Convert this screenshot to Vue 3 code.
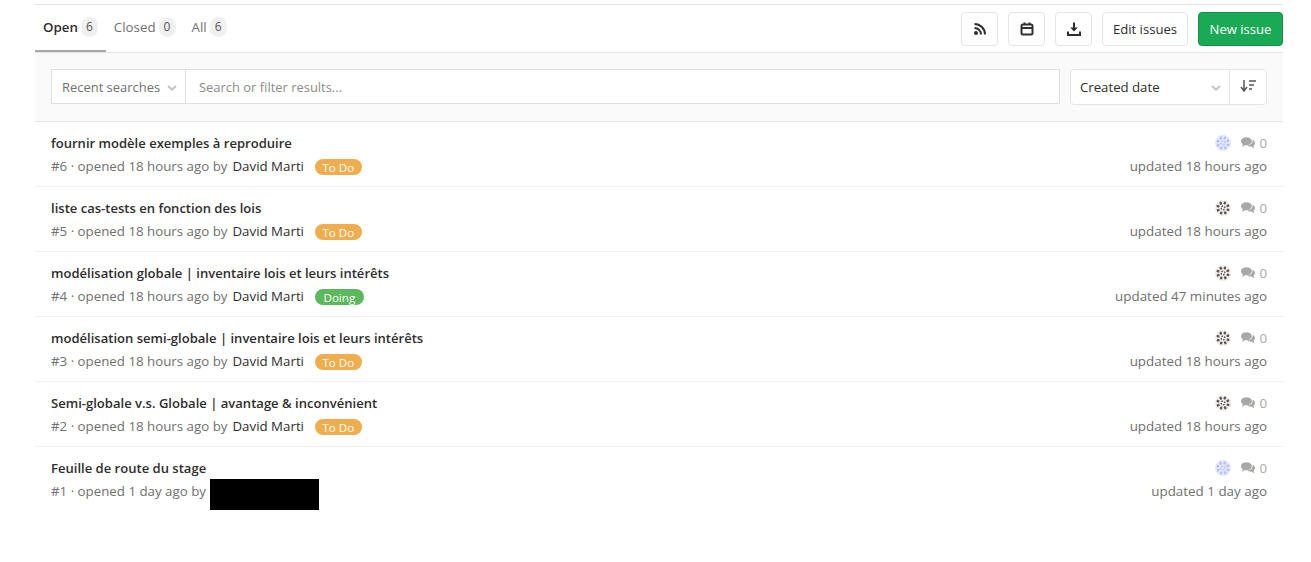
<script setup>
const issues = [
  { id: 6, title: 'fournir modèle exemples à reproduire', opened: '18 hours ago', author: 'David Marti', label: 'To Do', updated: '18 hours ago', light: true },
  { id: 5, title: 'liste cas-tests en fonction des lois', opened: '18 hours ago', author: 'David Marti', label: 'To Do', updated: '18 hours ago' },
  { id: 4, title: 'modélisation globale | inventaire lois et leurs intérêts', opened: '18 hours ago', author: 'David Marti', label: 'Doing', updated: '47 minutes ago' },
  { id: 3, title: 'modélisation semi-globale | inventaire lois et leurs intérêts', opened: '18 hours ago', author: 'David Marti', label: 'To Do', updated: '18 hours ago' },
  { id: 2, title: 'Semi-globale v.s. Globale | avantage & inconvénient', opened: '18 hours ago', author: 'David Marti', label: 'To Do', updated: '18 hours ago' },
  { id: 1, title: 'Feuille de route du stage', opened: '1 day ago', redacted: true, updated: '1 day ago', light: true },
]
const tabs = [
  { name: 'Open', count: 6, active: true },
  { name: 'Closed', count: 0 },
  { name: 'All', count: 6 },
]
const spokes = [0, 45, 90, 135, 180, 225, 270, 315]
</script>

<template>
  <div class="page">
    <div class="top">
      <div class="tabs">
        <div v-for="t in tabs" :key="t.name" class="tab" :class="{ active: t.active }">
          {{ t.name }}<span class="count">{{ t.count }}</span>
        </div>
      </div>
      <div class="actions">
        <button class="btn icon">
          <svg width="16" height="16" viewBox="0 0 16 16" fill="none" stroke="#2e2e2e" stroke-width="2"><circle cx="4" cy="12" r="2" fill="#2e2e2e" stroke="none"/><path d="M2.5 7a6.5 6.5 0 0 1 6.5 6.5M2.5 3a10.5 10.5 0 0 1 10.5 10.5"/></svg>
        </button>
        <button class="btn icon">
          <svg width="16" height="16" viewBox="0 0 16 16" fill="none" stroke="#2e2e2e" stroke-width="2"><rect x="2.5" y="3.5" width="11" height="10" rx="1.5"/><path d="M3 7h10M5.5 1.5v2.5M10.5 1.5v2.5"/></svg>
        </button>
        <button class="btn icon">
          <svg width="16" height="16" viewBox="0 0 16 16" fill="none" stroke="#2e2e2e" stroke-width="2"><path d="M2 10.5v3.5h12v-3.5"/><path d="M8 1.5v7" /><path d="M4.2 6.5 8 10.5l3.8-4z" fill="#2e2e2e" stroke="none"/></svg>
        </button>
        <button class="btn edit">Edit issues</button>
        <button class="btn primary">New issue</button>
      </div>
    </div>

    <div class="filters">
      <div class="search">
        <div class="recent">Recent searches
          <svg class="chev" width="10" height="6" viewBox="0 0 10 6" fill="none" stroke="#c4c4c4" stroke-width="2"><path d="M1 1l4 3.6L9 1"/></svg>
        </div>
        <div class="placeholder">Search or filter results...</div>
      </div>
      <div class="sort">
        <div class="sort-field">Created date
          <svg class="chev" width="10" height="6" viewBox="0 0 10 6" fill="none" stroke="#c4c4c4" stroke-width="2"><path d="M1 1l4 3.6L9 1"/></svg>
        </div>
        <div class="sort-dir">
          <svg width="16" height="14" viewBox="0 0 16 14" fill="none" stroke="#555" stroke-width="1.5"><path d="M4 1v10M1 8l3 4 3-4"/><path d="M9 2h7M9 6h5M9 10h3"/></svg>
        </div>
      </div>
    </div>

    <div class="row" v-for="i in issues" :key="i.id">
      <div class="main">
        <div class="title">{{ i.title }}</div>
        <div class="meta">
          <span>#{{ i.id }} · opened {{ i.opened }} by</span>
          <span v-if="i.redacted" class="redact"></span>
          <template v-else>
            <span class="author">{{ i.author }}</span>
            <span class="label" :class="i.label === 'Doing' ? 'doing' : 'todo'">{{ i.label }}</span>
          </template>
        </div>
      </div>
      <div class="side">
        <div class="stats">
          <svg class="avatar" width="16" height="16" viewBox="0 0 16 16">
            <circle cx="8" cy="8" r="8" :fill="i.light ? '#e4e8fc' : '#f0eeec'"/>
            <g :fill="i.light ? '#b4c0f5' : '#5a544e'">
              <rect v-for="a in spokes" :key="a" x="6.8" y="1.2" width="2.4" height="3" rx="1" :transform="`rotate(${a + 20} 8 8)`"/>
              <rect v-for="a in spokes.slice(0, 4)" :key="'c' + a" x="7.2" y="5.4" width="1.6" height="1.4" :transform="`rotate(${a * 2 + 65} 8 8)`"/>
            </g>
          </svg>
          <svg class="bubble" width="14" height="12" viewBox="0 0 14 12" fill="#a8a8a8"><ellipse cx="5.4" cy="4.2" rx="5.4" ry="4"/><path d="M2 6.5 1.2 10 5 7.5z"/><path d="M11.6 2.8C13 3.5 14 4.6 14 6c0 1.1-.6 2-1.5 2.7l.9 2.6-3.3-1.8c-1.3.1-2.9-.2-3.9-1 2.8-.1 6-1.9 5.4-5.7z"/></svg>
          <span class="num">0</span>
        </div>
        <div class="updated">updated {{ i.updated }}</div>
      </div>
    </div>
  </div>
</template>

<style>
html, body { margin: 0; background: #fff; }
</style>

<style scoped>
.page {
  margin: 4px 28px 0 35px;
  border-top: 1px solid #e5e5e5;
  font-family: "Open Sans", "Noto Sans", sans-serif;
  font-size: 13.3px;
  color: #2e2e2e;
}
.top {
  display: flex;
  justify-content: space-between;
  height: 47px;
  border-bottom: 1px solid #e5e5e5;
}
.tabs { display: flex; }
.tab {
  display: flex;
  align-items: center;
  height: 45px;
  padding: 0 8px 2px;
  box-sizing: border-box;
  color: #707070;
}
.tab.active {
  height: 47px;
  padding-bottom: 2px;
  color: #2e2e2e;
  font-weight: 600;
  border-bottom: 2px solid #a8a8a8;
}
.count {
  display: inline-block;
  min-width: 17px;
  height: 20px;
  line-height: 20px;
  margin-left: 3px;
  border-radius: 10px;
  background: #f0f0f0;
  font-size: 12px;
  font-weight: 400;
  text-align: center;
  color: #555;
}
.actions { display: flex; gap: 10px; padding-top: 7px; height: 34px; }
.btn {
  height: 34px;
  padding: 0;
  font: inherit;
  font-size: 13.1px;
  color: #2e2e2e;
  background: #fff;
  border: 1px solid #e5e5e5;
  border-radius: 4px;
  display: flex;
  align-items: center;
  justify-content: center;
}
.btn.icon { width: 37px; }
.btn.edit { width: 86px; }
.btn.primary { width: 85px; background: #1aaa55; border-color: #168f48; color: #fff; }
.filters {
  display: flex;
  justify-content: space-between;
  height: 69px;
  padding: 16px 16px 0;
  box-sizing: border-box;
  background: #fafafa;
  border-bottom: 1px solid #e5e5e5;
}
.search {
  flex: 0 0 1009px;
  height: 35px;
  box-sizing: border-box;
  display: flex;
  background: #fff;
  border: 1px solid #dfdfdf;
  font-size: 12.95px;
}
.recent {
  width: 134px;
  display: flex;
  align-items: center;
  padding-left: 10px;
  box-sizing: border-box;
  color: #707070;
  border-right: 1px solid #dfdfdf;
  position: relative;
}
.chev { position: absolute; right: 8px; top: 15px; }
.placeholder { padding-left: 13px; color: #8c8c8c; line-height: 35px; }
.sort { width: 197px; height: 36px; display: flex; background: #fff; border: 1px solid #e5e5e5; border-radius: 4px; box-sizing: border-box; }
.sort-field {
  flex: 1;
  position: relative;
  padding-left: 9px;
  line-height: 34px;
  font-size: 13.2px;
  color: #2e2e2e;
  border-right: 1px solid #e5e5e5;
}
.sort-dir { width: 36px; display: flex; align-items: center; justify-content: center; padding-bottom: 3px; box-sizing: border-box; }
.row {
  height: 65px;
  box-sizing: border-box;
  padding: 10px 16px 0;
  display: flex;
  justify-content: space-between;
  border-bottom: 1px solid #f0f0f0;
}
.row:last-child { border-bottom: 0; }
.title { font-weight: 600; font-size: 13.05px; line-height: 22px; color: #2e2e2e; }
.meta { line-height: 22px; margin-top: 1px; color: #707070; display: flex; align-items: flex-start; gap: 5px; white-space: pre; }
.author { color: #2e2e2e; }
.label {
  margin-left: 6px;
  margin-top: 4px;
  height: 16px;
  line-height: 18px;
  padding: 0 7.5px;
  border-radius: 8px;
  font-size: 11.6px;
  color: #fff;
}
.todo { background: #f0ad4e; }
.doing { background: #5cb85c; padding: 0 8.5px; }
.redact { width: 109px; height: 31px; background: #000; margin-top: -1px; margin-bottom: -10px; display: block; margin-left: -1px; }
.side { text-align: right; }
.stats { display: flex; justify-content: flex-end; align-items: center; height: 22px; color: #a8a8a8; }
.avatar { margin-right: 10px; margin-left: 1px; }
.bubble { margin-right: 4px; }
.updated { font-size: 13.4px; line-height: 22px; margin-top: 1px; color: #707070; }
</style>
